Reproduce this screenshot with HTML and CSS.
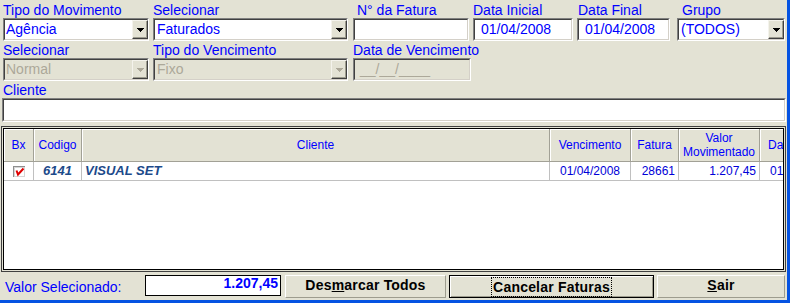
FILE: index.html
```html
<!DOCTYPE html>
<html lang="pt-BR">
<head>
<meta charset="utf-8">
<title>Cancelar Faturas</title>
<link rel="stylesheet" href="styles.css">
</head>
<body>
<div class="window">
  <div class="form">
    <div class="row">
      <div class="field w-mov">
        <span class="lbl">Tipo do Movimento</span>
        <div class="box"><div class="in pl1"><span class="val">Agência</span><span class="drop"><svg width="7" height="4" viewBox="0 0 7 4"><rect x="0" y="0" width="7" height="1"/><rect x="1" y="1" width="5" height="1"/><rect x="2" y="2" width="3" height="1"/><rect x="3" y="3" width="1" height="1"/></svg></span></div></div>
      </div>
      <div class="field w-sel">
        <span class="lbl">Selecionar</span>
        <div class="box"><div class="in pl2"><span class="val">Faturados</span><span class="drop"><svg width="7" height="4" viewBox="0 0 7 4"><rect x="0" y="0" width="7" height="1"/><rect x="1" y="1" width="5" height="1"/><rect x="2" y="2" width="3" height="1"/><rect x="3" y="3" width="1" height="1"/></svg></span></div></div>
      </div>
      <div class="field w-fat ml1">
        <span class="lbl pl4">N° da Fatura</span>
        <div class="box"><div class="in"></div></div>
      </div>
      <div class="field w-dti">
        <span class="lbl">Data Inicial</span>
        <div class="box"><div class="in pl6">01/04/2008</div></div>
      </div>
      <div class="field w-dtf">
        <span class="lbl pl1">Data Final</span>
        <div class="box"><div class="in pl6">01/04/2008</div></div>
      </div>
      <div class="field w-grp ml3">
        <span class="lbl pl5">Grupo</span>
        <div class="box"><div class="in pl2"><span class="val">(TODOS)</span><span class="drop"><svg width="7" height="4" viewBox="0 0 7 4"><rect x="0" y="0" width="7" height="1"/><rect x="1" y="1" width="5" height="1"/><rect x="2" y="2" width="3" height="1"/><rect x="3" y="3" width="1" height="1"/></svg></span></div></div>
      </div>
    </div>
    <div class="row">
      <div class="field w-mov">
        <span class="lbl">Selecionar</span>
        <div class="box disabled"><div class="in pl1"><span class="val">Normal</span><span class="drop"><svg width="7" height="4" viewBox="0 0 7 4"><rect x="0" y="0" width="7" height="1"/><rect x="1" y="1" width="5" height="1"/><rect x="2" y="2" width="3" height="1"/><rect x="3" y="3" width="1" height="1"/></svg></span></div></div>
      </div>
      <div class="field w-sel">
        <span class="lbl">Tipo do Vencimento</span>
        <div class="box disabled"><div class="in pl2"><span class="val">Fixo</span><span class="drop"><svg width="7" height="4" viewBox="0 0 7 4"><rect x="0" y="0" width="7" height="1"/><rect x="1" y="1" width="5" height="1"/><rect x="2" y="2" width="3" height="1"/><rect x="3" y="3" width="1" height="1"/></svg></span></div></div>
      </div>
      <div class="field w-venc ml1">
        <span class="lbl">Data de Vencimento</span>
        <div class="box disabled"><div class="in pl5">__/__/____</div></div>
      </div>
    </div>
    <div class="row">
      <div class="field w-cli">
        <span class="lbl pl1">Cliente</span>
        <div class="box tall"><div class="in"></div></div>
      </div>
    </div>

    <div class="grid">
      <div class="grid-in">
        <div class="cols thead">
          <div class="th">Bx</div>
          <div class="th">Codigo</div>
          <div class="th">Cliente</div>
          <div class="th">Vencimento</div>
          <div class="th">Fatura</div>
          <div class="th">Valor<br>Movimentado</div>
          <div class="th left">Data Baixa</div>
        </div>
        <div class="cols trow">
          <div class="td center"><svg width="12" height="11" viewBox="0 0 12 11"><rect x="0" y="0" width="12" height="11" fill="#8E8E8E"/><rect x="1" y="1" width="11" height="10" fill="#D6D6D6"/><rect x="2" y="2" width="9" height="8" fill="#FFFFFF"/><path d="M3.5 4.5 L5 8.5 L10.5 2.5" fill="none" stroke="#E00000" stroke-width="2"/></svg></div>
          <div class="td center strong">6141</div>
          <div class="td strong">VISUAL SET</div>
          <div class="td center">01/04/2008</div>
          <div class="td right">28661</div>
          <div class="td right">1.207,45</div>
          <div class="td lastc">01/04/2008</div>
        </div>
      </div>
    </div>

    <div class="bottom">
      <span class="total-lbl">Valor Selecionado:</span>
      <span class="total">1.207,45</span>
      <button class="btn btn-desm" type="button">Des<u>m</u>arcar Todos</button>
      <button class="btn btn-cancel" type="button"><span class="focus">Cancelar Faturas</span></button>
      <button class="btn btn-sair" type="button"><u>S</u>air</button>
    </div>
  </div>
</div>
</body>
</html>
```

FILE: styles.css
```css
* { box-sizing: border-box; }
html, body { margin: 0; padding: 0; }
body {
  background: #E3E2D4;
  font-family: "Liberation Sans", Arial, sans-serif;
}
.window {
  width: 790px;
  height: 303px;
  background: #E3E2D4;
  border-right: 3px solid #0553E2;
  border-bottom: 3px solid #0553E2;
  overflow: hidden;
}
.form { padding: 2px 0 0 3px; }
.row { display: flex; gap: 4px; }
.row + .row { margin-top: 1px; }
.field { display: flex; flex-direction: column; }
.w-mov { width: 146px; }
.w-sel { width: 195px; }
.w-fat { width: 116px; }
.w-dti { width: 100px; }
.w-dtf { width: 93px; }
.w-grp { width: 108px; }
.w-venc { width: 118px; }
.w-cli { width: 784px; margin-left: -1px; }
.ml1 { margin-left: 1px; }
.ml3 { margin-left: 3px; }
.pl1 { padding-left: 1px; }
.pl2 { padding-left: 2px; }
.pl4 { padding-left: 4px; }
.pl5 { padding-left: 5px; }
.pl6 { padding-left: 6px; }

.lbl {
  height: 16px;
  line-height: 16px;
  font-size: 14px;
  color: #0000FF;
  white-space: nowrap;
}
.box {
  height: 23px;
  border: 1px solid;
  border-color: #808080 #FFFFFF #FFFFFF #808080;
  background: #FFFFFF;
}
.box.tall { height: 24px; }
.box .in {
  height: 100%;
  border: 1px solid;
  border-color: #404040 #D4D0C8 #D4D0C8 #404040;
  display: flex;
  align-items: center;
  font-size: 14px;
  line-height: 19px;
  color: #0000FF;
  white-space: nowrap;
}
.box .val { flex: 1; }
.drop {
  width: 16px;
  height: 19px;
  flex: none;
  margin-right: -1px;
  background: #E3E2D4;
  border: 1px solid;
  border-color: #F4F3EC #404040 #404040 #F4F3EC;
  box-shadow: inset -1px -1px 0 #9D9C8E;
  display: flex;
  align-items: center;
  justify-content: center;
}
.drop svg { fill: #000000; margin-top: 1px; }
.box.disabled { background: #E3E2D4; }
.box.disabled .in { color: #ACA899; }
.box.disabled .drop svg { fill: #ACA899; }

.grid {
  margin: 4px 0 0 -2px;
  width: 785px;
  height: 146px;
  border: 1px solid #404040;
  padding: 1px;
}
.grid-in {
  height: 100%;
  border: 1px solid #000000;
  background: #FFFFFF;
  overflow: hidden;
}
.cols {
  display: grid;
  grid-template-columns: 30px 48px 468px 81px 48px 81px 81px;
}
.th {
  height: 33px;
  background: #E3E2D4;
  border-right: 1px solid #A2A196;
  border-bottom: 1px solid #A2A196;
  box-shadow: inset 1px 1px 0 #FFFFFF;
  display: flex;
  align-items: center;
  justify-content: center;
  text-align: center;
  font-size: 12px;
  line-height: 14px;
  color: #0000FF;
  white-space: nowrap;
}
.th.left { justify-content: flex-start; padding-left: 8px; }
.td {
  height: 19px;
  border-right: 1px solid #C0C0C0;
  border-bottom: 1px solid #C0C0C0;
  font-size: 12px;
  line-height: 18px;
  color: #0000D8;
  padding: 0 3px;
  white-space: nowrap;
  overflow: hidden;
  display: flex;
  align-items: center;
}
.td.center { justify-content: center; padding: 0; }
.td.right { justify-content: flex-end; }
.td.lastc { padding-left: 10px; }
.td.strong { font-size: 13px; font-weight: bold; font-style: italic; color: #1C4A8A; }

.bottom {
  display: flex;
  align-items: center;
  margin-top: 3px;
  height: 23px;
}
.total-lbl {
  width: 142px;
  padding-left: 2px;
  font-size: 14px;
  line-height: 16px;
  color: #0000FF;
  white-space: nowrap;
}
.total {
  align-self: flex-start;
  width: 136px;
  height: 21px;
  margin-right: 4px;
  border: 1px solid #000000;
  background: #FFFFFF;
  text-align: right;
  padding-right: 2px;
  font-size: 14px;
  line-height: 15px;
  font-weight: bold;
  color: #0000FF;
}
.btn {
  height: 23px;
  padding: 0 0 2px 0;
  margin: 0;
  font-family: "Liberation Sans", Arial, sans-serif;
  font-size: 14px;
  font-weight: bold;
  letter-spacing: 0.2px;
  line-height: 17px;
  color: #000000;
  background: #E3E2D4;
  border: 1px solid;
  border-color: #FFFFFF #9D9C8E #9D9C8E #FFFFFF;
  display: flex;
  align-items: center;
  justify-content: center;
}
.btn-desm { width: 161px; }
.btn-cancel {
  width: 205px;
  margin-left: 3px;
  border-color: #000000;
  box-shadow: inset 1px 1px 0 #FFFFFF, inset -1px -1px 0 #9D9C8E;
  padding: 0;
}
.btn-sair { width: 128px; margin-left: 3px; }
.focus {
  display: inline-block;
  height: 20px;
  line-height: 18px;
  padding: 0 1px;
  border: 1px dotted #000000;
}
```
